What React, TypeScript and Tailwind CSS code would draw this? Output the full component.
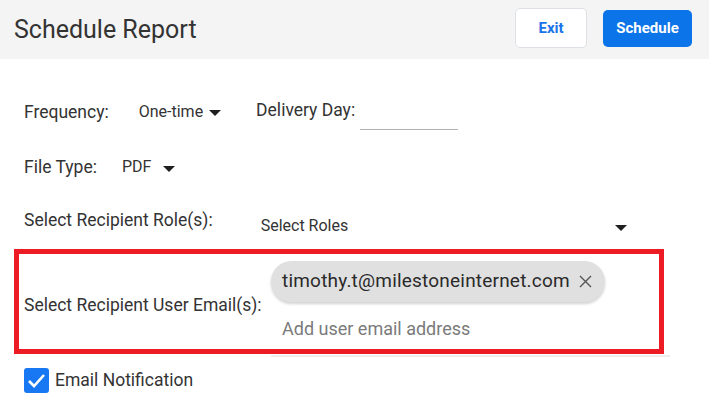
import React from 'react';

const Caret: React.FC<{ className?: string }> = ({ className = '' }) => (
  <span
    className={`inline-block h-0 w-0 border-x-[6px] border-t-[6px] border-x-transparent border-t-[#1f1f1f] ${className}`}
  />
);

const App: React.FC = () => {
  return (
    <div className="min-h-screen bg-white font-['Roboto',sans-serif] text-[#333]">
      <header className="flex h-[59px] items-center justify-between bg-[#f4f4f4] pl-[14px] pr-[17px]">
        <h1 className="text-[25px] font-normal text-[#333]">Schedule Report</h1>
        <div className="mb-[3px] flex items-center gap-4">
          <button className="h-10 w-[72px] rounded-[5px] border border-[#dde1e6] bg-white text-[15px] font-bold text-[#1a73e8]">
            Exit
          </button>
          <button className="h-[37px] w-[89px] rounded-[5px] bg-[#0a74e8] text-[15px] font-bold text-white">
            Schedule
          </button>
        </div>
      </header>

      <main className="pl-6">
        {/* frequency + delivery day */}
        <div className="mt-[35px] flex h-9 items-center">
          <span className="text-[17.5px]">Frequency:</span>
          <span className="ml-[30px] text-[16px]">One-time</span>
          <Caret className="ml-[6px] mt-[2px]" />
          <span className="mb-[3px] ml-[35px] text-[17.5px]">Delivery Day:</span>
          <div className="ml-[5px] w-[98px] self-stretch border-b border-[#b0b0b0]" />
        </div>

        <div className="mt-[19px] flex h-9 items-center">
          <span className="text-[17.5px]">File Type:</span>
          <span className="ml-[25px] text-[16px]">PDF</span>
          <Caret className="ml-[12px] mt-[3px]" />
        </div>

        <div className="mt-[17px] flex h-9 items-center">
          <span className="text-[17.5px]">Select Recipient Role(s):</span>
          <div className="ml-[48px] flex w-[366px] items-center justify-between pt-3">
            <span className="text-[16px]">Select Roles</span>
            <Caret className="mt-[3px]" />
          </div>
        </div>

        {/* recipient emails, outlined */}
        <div className="relative mt-[11px] flex h-[108px] items-center">
          <span className="mt-1 w-[247px] shrink-0 text-[17.5px]">Select Recipient User Email(s):</span>
          <div className="flex w-[399px] flex-col self-stretch border-b-2 border-[#eeeeee] pt-3">
            <div className="flex h-[41px] w-fit items-center rounded-full bg-[#e0e0e0] pl-[11px] pr-[13px] shadow-[0_2px_3px_rgba(0,0,0,0.18)]">
              <span className="text-[19px] tracking-[0.2px] text-[#2a2a2a]">timothy.t@milestoneinternet.com</span>
              <svg className="ml-[9px]" width="13" height="13" viewBox="0 0 13 13">
                <path d="M1 1L12 12M12 1L1 12" stroke="#555" strokeWidth="1.4" />
              </svg>
            </div>
            <span className="mt-[15px] pl-[11px] text-[18px] leading-6 text-[#7a7a7a]">Add user email address</span>
          </div>
          <div className="pointer-events-none absolute left-[-10px] top-0 h-[105px] w-[650px] border-[5px] border-[#ed1c24]" />
        </div>

        <div className="mt-[11px] flex h-[25px] items-center">
          <span className="flex h-[25px] w-[25px] items-center justify-center rounded-[3px] bg-[#1877f2]">
            <svg width="25" height="25" viewBox="0 0 25 25">
              <path d="M5 13L10 18L20 7" fill="none" stroke="white" strokeWidth="2.6" />
            </svg>
          </span>
          <span className="ml-[6px] text-[17.5px]">Email Notification</span>
        </div>
      </main>
    </div>
  );
};

export default App;
